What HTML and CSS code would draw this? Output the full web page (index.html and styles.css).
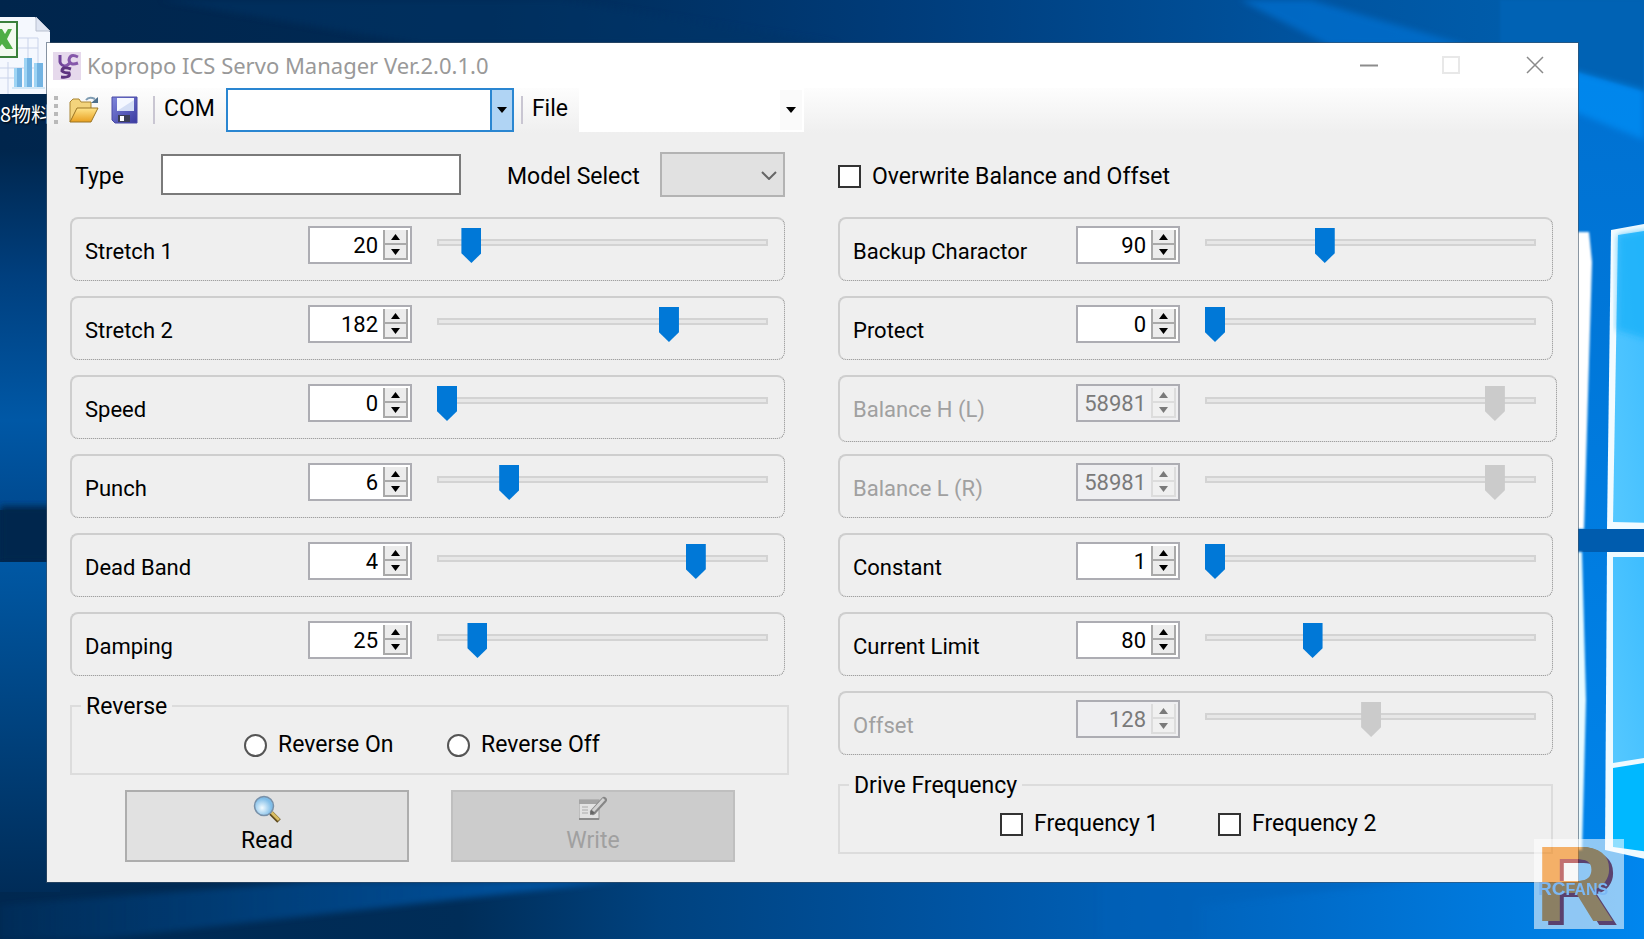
FILE: index.html
```html
<!DOCTYPE html>
<html lang="en">
<head>
<meta charset="utf-8">
<title>Kopropo ICS Servo Manager</title>
<link rel="stylesheet" href="styles.css">
</head>
<body>
<div class="desktop">
  <svg class="wallpaper" viewBox="0 0 1644 939" preserveAspectRatio="none" aria-hidden="true">
    <defs>
      <linearGradient id="sky" x1="0" x2="1" y1="0" y2="0">
        <stop offset="0" stop-color="#00254c"/><stop offset=".3" stop-color="#002a55"/>
        <stop offset=".55" stop-color="#003c7a"/><stop offset=".8" stop-color="#0054a0"/>
        <stop offset="1" stop-color="#0062b2"/>
      </linearGradient>
      <linearGradient id="floor" x1="0" x2="1" y1="0" y2="0">
        <stop offset="0" stop-color="#002850"/><stop offset=".28" stop-color="#002d58"/>
        <stop offset=".4" stop-color="#00427f"/><stop offset=".6" stop-color="#0056a6"/>
        <stop offset=".8" stop-color="#006cca"/><stop offset="1" stop-color="#0086ee"/>
      </linearGradient>
      <linearGradient id="beam" x1="0" x2="1" y1="0" y2="0">
        <stop offset="0" stop-color="#0060b8" stop-opacity=".1"/><stop offset="1" stop-color="#0064c0"/>
      </linearGradient>
      <linearGradient id="side" x1="0" x2="0" y1="0" y2="1">
        <stop offset="0" stop-color="#00264d"/><stop offset=".35" stop-color="#003f7e"/>
        <stop offset=".75" stop-color="#0058a6"/><stop offset="1" stop-color="#004a90"/>
      </linearGradient>
      <linearGradient id="side2" x1="0" x2="0" y1="0" y2="1">
        <stop offset="0" stop-color="#0058a4"/><stop offset="1" stop-color="#002c58"/>
      </linearGradient>
      <linearGradient id="right" x1="0" x2="0" y1="0" y2="1">
        <stop offset="0" stop-color="#0070d0"/><stop offset="1" stop-color="#0084ea"/>
      </linearGradient>
      <linearGradient id="pane" x1="0" x2="1" y1="1" y2="0">
        <stop offset="0" stop-color="#55c8ff"/><stop offset="1" stop-color="#3cbcff"/>
      </linearGradient>
      <filter id="soft"><feGaussianBlur stdDeviation="3"/></filter>
      <filter id="glow"><feGaussianBlur stdDeviation="1"/></filter>
    </defs>
    <rect width="1644" height="500" fill="url(#sky)"/>
    <rect y="500" width="1644" height="439" fill="url(#floor)"/>
    <path d="M160 0L420 44H840L560 0Z" fill="#003468" opacity=".5" filter="url(#soft)"/>
    <path d="M1240 0L1310 0L1470 46H1330Z" fill="#0072d4" opacity=".7" filter="url(#soft)"/>
    <rect y="150" width="60" height="360" fill="url(#side)"/>
    <rect y="506" width="60" height="56" fill="#00264e" filter="url(#soft)"/>
    <rect y="562" width="60" height="330" fill="url(#side2)"/>
    <path d="M100 939L620 881H320L0 905V939Z" fill="url(#beam)" opacity=".75" filter="url(#soft)"/>
    <path d="M1200 905L1420 881H1100V939H1200Z" fill="#0060b8" opacity=".5" filter="url(#soft)"/>
    <path d="M1560 40H1644V860H1560Z" fill="url(#right)"/>
    <path d="M1500 0H1644V92L1570 70V44H1500Z" fill="#0062b4" filter="url(#glow)"/>
    <path d="M1570 70L1644 90V140L1570 110Z" fill="#0090f8" opacity=".7" filter="url(#soft)"/>
    <path d="M1574 232H1589L1592 262L1584 529H1574Z" fill="#fff" filter="url(#glow)"/>
    <path d="M1611 230L1650 223V529H1607Z" fill="#f2fbff"/>
    <path d="M1618 235L1650 230V523L1613 522Z" fill="url(#pane)"/>
    <path d="M1618 235L1650 230V340L1617 330Z" fill="#18b0f8" opacity=".7" filter="url(#soft)"/>
    <path d="M1574 529H1650V552H1574Z" fill="#005cae"/>
    <path d="M1574 552H1582L1586 700L1582 850H1574Z" fill="#e8faff" filter="url(#glow)"/>
    <path d="M1607 552H1650V860L1605 850Z" fill="#eefaff"/>
    <path d="M1613 557H1650V757L1613 763Z" fill="url(#pane)"/>
    <path d="M1613 768L1650 762V852L1613 847Z" fill="#00b8ff"/>
  </svg>

  <div class="shortcut">
    <svg class="shortcut-icon" viewBox="0 0 50 80" aria-hidden="true">
      <path d="M0 1H35L50 16V78H0Z" fill="#f5f8fe"/>
      <path d="M36 1V15H50Z" fill="#dfe5f2" stroke="#b9c0cf"/>
      <path d="M18 22H38V60M0 52H40M18 32H38M28 22V60M8 46V78M0 62H16" fill="none" stroke="#c9d3ea"/>
      <rect x="-8" y="6" width="25" height="35" fill="#f2faef" stroke="#39803a" stroke-width="2"/>
      <path d="M-6 13H2L5 18L8 13H12L7 23L13 33H6L2 28L-2 33Z" fill="#4fae45"/>
      <path d="M14 52H22V71H14ZM24 42H32V71H24ZM34 47H43V71H34Z" fill="#72b3e2"/>
      <path d="M14 52H17V71H14ZM24 42H27V71H24ZM34 47H37V71H34Z" fill="#9ed4f4"/>
      <path d="M12 72H45" stroke="#b2d8ef"/>
    </svg>
    <span class="shortcut-label">8物料</span>
  </div>

  <main class="window">
    <header class="titlebar">
      <svg class="app-icon" viewBox="0 0 28 28" aria-hidden="true">
        <rect width="28" height="28" fill="#e6d9ec"/>
        <path d="M7 3V10Q8 14 13 14" fill="none" stroke="#71459a" stroke-width="3"/>
        <path d="M25 5Q17 1 16 8Q17 14 25 11M12 15L17 11" fill="none" stroke="#8557aa" stroke-width="3"/>
        <path d="M18 17Q9 14 9 19Q11 21 16 21Q18 26 8 25" fill="none" stroke="#5e3480" stroke-width="3"/>
      </svg>
      <h1 class="title">Kopropo ICS Servo Manager Ver.2.0.1.0</h1>
      <button class="caption-button" type="button" aria-label="Minimize"><svg viewBox="0 0 18 18"><path d="M0 9.500H18" stroke="#8c8c8c" stroke-width="2"/></svg></button>
      <button class="caption-button" type="button" aria-label="Maximize" disabled><svg viewBox="0 0 18 18"><rect x="1" y="1" width="16" height="16" fill="none" stroke="#e8e8e8" stroke-width="2"/></svg></button>
      <button class="caption-button" type="button" aria-label="Close"><svg viewBox="0 0 18 18"><path d="M1 1L17 17M17 1L1 17" stroke="#8a8a8a" stroke-width="1.500"/></svg></button>
    </header>

    <div class="toolbar">
      <span class="grip"></span>
      <button class="tool" type="button" aria-label="Open">
        <svg viewBox="0 0 30 28"><defs><linearGradient id="fold" x1="0" x2="0" y1="0" y2="1"><stop offset="0" stop-color="#ffe58a"/><stop offset="1" stop-color="#e9a020"/></linearGradient></defs>
          <path d="M1 26V6L4 3H10L12 6H22V12" fill="#f3d47c" stroke="#a98432"/>
          <path d="M1 26L8 12H29L22 26Z" fill="url(#fold)" stroke="#9a7424"/>
          <path d="M17 4Q20 0 26 3" fill="none" stroke="#7f9cb2" stroke-width="2"/><path d="M29 1V7H22Z" fill="#4d6f8c"/></svg>
      </button>
      <button class="tool" type="button" aria-label="Save">
        <svg viewBox="0 0 30 28"><defs><linearGradient id="disk" x1="0" x2="1" y1="0" y2="1"><stop offset="0" stop-color="#7f86dc"/><stop offset="1" stop-color="#3a3aa0"/></linearGradient></defs>
          <path d="M1 1H26V27H4L1 24Z" fill="url(#disk)" stroke="#4a4aa6"/>
          <rect x="6" y="2" width="17" height="13" fill="#f4f7ff"/><path d="M6 15L23 4V15Z" fill="#d4def5"/>
          <rect x="7" y="19" width="12" height="7" fill="#3c3f58"/><rect x="9" y="20" width="4" height="5" fill="#fff"/></svg>
      </button>
      <span class="separator"></span>
      <label class="tool-label" for="com">COM</label>
      <span class="combo combo-active">
        <select id="com"><option></option></select>
        <span class="combo-arrow"><svg viewBox="0 0 10 6"><path d="M0 0H10L5 6Z"/></svg></span>
      </span>
      <span class="separator"></span>
      <label class="tool-label" for="file">File</label>
      <span class="combo combo-flat">
        <select id="file"><option></option></select>
        <span class="combo-arrow"><svg viewBox="0 0 10 6"><path d="M0 0H10L5 6Z"/></svg></span>
      </span>
    </div>

    <form class="panel">
      <section class="column">
        <div class="column-head">
          <label class="type-label" for="type">Type</label>
          <input class="type-input" id="type" type="text">
          <label class="model-label" for="model">Model Select</label>
          <span class="model">
            <select id="model"><option></option></select>
            <svg class="chevron" viewBox="0 0 16 9"><path d="M1 1L8 8L15 1" fill="none" stroke="#666" stroke-width="2"/></svg>
          </span>
        </div>
        <div class="rows">
          <div class="row"><label for="n1">Stretch 1</label><span class="spinner"><input id="n1" type="number" value="20"><span class="steps"><button type="button" aria-label="Increase"></button><button type="button" aria-label="Decrease"></button></span></span><input class="slider" type="range" aria-label="Stretch 1" min="0" max="255" value="20"></div>
          <div class="row"><label for="n2">Stretch 2</label><span class="spinner"><input id="n2" type="number" value="182"><span class="steps"><button type="button" aria-label="Increase"></button><button type="button" aria-label="Decrease"></button></span></span><input class="slider" type="range" aria-label="Stretch 2" min="0" max="255" value="182"></div>
          <div class="row"><label for="n3">Speed</label><span class="spinner"><input id="n3" type="number" value="0"><span class="steps"><button type="button" aria-label="Increase"></button><button type="button" aria-label="Decrease"></button></span></span><input class="slider" type="range" aria-label="Speed" min="0" max="255" value="0"></div>
          <div class="row"><label for="n4">Punch</label><span class="spinner"><input id="n4" type="number" value="6"><span class="steps"><button type="button" aria-label="Increase"></button><button type="button" aria-label="Decrease"></button></span></span><input class="slider" type="range" aria-label="Punch" min="0" max="30" value="6"></div>
          <div class="row"><label for="n5">Dead Band</label><span class="spinner"><input id="n5" type="number" value="4"><span class="steps"><button type="button" aria-label="Increase"></button><button type="button" aria-label="Decrease"></button></span></span><input class="slider" type="range" aria-label="Dead Band" min="0" max="5" value="4"></div>
          <div class="row"><label for="n6">Damping</label><span class="spinner"><input id="n6" type="number" value="25"><span class="steps"><button type="button" aria-label="Increase"></button><button type="button" aria-label="Decrease"></button></span></span><input class="slider" type="range" aria-label="Damping" min="0" max="255" value="25"></div>
        </div>
        <fieldset class="group group-wide">
          <legend>Reverse</legend>
          <div class="choices reverse">
            <label class="choice"><input type="radio" name="reverse">Reverse On</label>
            <label class="choice"><input type="radio" name="reverse">Reverse Off</label>
          </div>
        </fieldset>
        <div class="actions">
          <button class="action" type="button">
            <svg viewBox="0 0 28 28"><defs><radialGradient id="lens" cx=".4" cy=".6"><stop offset="0" stop-color="#f2fbff"/><stop offset="1" stop-color="#7fbde8"/></radialGradient></defs>
              <path d="M18 18L26 26" stroke="#5e4a1c" stroke-width="5"/><path d="M18 17L26 25" stroke="#d9bd63" stroke-width="3"/>
              <circle cx="11" cy="11" r="9.500" fill="url(#lens)" stroke="#7890a8" stroke-width="1.500"/></svg>
            Read
          </button>
          <button class="action" type="button" disabled>
            <svg viewBox="0 0 28 28"><rect x="0" y="5" width="20" height="19" fill="#e2e2e2" stroke="#999"/><rect x="0" y="5" width="20" height="4" fill="#a4a4a4"/>
              <path d="M3 12H9M3 15H9M3 18H9M11 18H17" stroke="#aaa"/><path d="M0 24H20" stroke="#8c8c8c" stroke-width="2"/>
              <path d="M14 17L25 5" stroke="#868686" stroke-width="6" stroke-linecap="round"/><path d="M14 16L25 4" stroke="#d2d2d2" stroke-width="3"/><path d="M11 20L12 15L16 18Z" fill="#666"/></svg>
            Write
          </button>
        </div>
      </section>

      <section class="column">
        <div class="column-head">
          <label class="choice"><input type="checkbox">Overwrite Balance and Offset</label>
        </div>
        <div class="rows">
          <div class="row"><label for="n7">Backup Charactor</label><span class="spinner"><input id="n7" type="number" value="90"><span class="steps"><button type="button" aria-label="Increase"></button><button type="button" aria-label="Decrease"></button></span></span><input class="slider" type="range" aria-label="Backup Charactor" min="0" max="255" value="90"></div>
          <div class="row"><label for="n8">Protect</label><span class="spinner"><input id="n8" type="number" value="0"><span class="steps"><button type="button" aria-label="Increase"></button><button type="button" aria-label="Decrease"></button></span></span><input class="slider" type="range" aria-label="Protect" min="0" max="255" value="0"></div>
          <div class="row row-large disabled"><label for="n9">Balance H (L)</label><span class="spinner"><input id="n9" type="number" value="58981" disabled><span class="steps"><button type="button" aria-label="Increase" disabled></button><button type="button" aria-label="Decrease" disabled></button></span></span><input class="slider" type="range" aria-label="Balance H (L)" min="0" max="65535" value="58981" disabled></div>
          <div class="row disabled"><label for="n10">Balance L (R)</label><span class="spinner"><input id="n10" type="number" value="58981" disabled><span class="steps"><button type="button" aria-label="Increase" disabled></button><button type="button" aria-label="Decrease" disabled></button></span></span><input class="slider" type="range" aria-label="Balance L (R)" min="0" max="65535" value="58981" disabled></div>
          <div class="row"><label for="n11">Constant</label><span class="spinner"><input id="n11" type="number" value="1"><span class="steps"><button type="button" aria-label="Increase"></button><button type="button" aria-label="Decrease"></button></span></span><input class="slider" type="range" aria-label="Constant" min="1" max="255" value="1"></div>
          <div class="row"><label for="n12">Current Limit</label><span class="spinner"><input id="n12" type="number" value="80"><span class="steps"><button type="button" aria-label="Increase"></button><button type="button" aria-label="Decrease"></button></span></span><input class="slider" type="range" aria-label="Current Limit" min="0" max="255" value="80"></div>
          <div class="row disabled"><label for="n13">Offset</label><span class="spinner"><input id="n13" type="number" value="128" disabled><span class="steps"><button type="button" aria-label="Increase" disabled></button><button type="button" aria-label="Decrease" disabled></button></span></span><input class="slider" type="range" aria-label="Offset" min="0" max="255" value="128" disabled></div>
        </div>
        <fieldset class="group">
          <legend>Drive Frequency</legend>
          <div class="choices frequency">
            <label class="choice"><input type="checkbox">Frequency 1</label>
            <label class="choice"><input type="checkbox">Frequency 2</label>
          </div>
        </fieldset>
      </section>
    </form>
  </main>

  <div class="watermark">
    <span class="watermark-letter">R</span>
    <span class="watermark-name">RC<small>FANS</small></span>
  </div>
</div>
</body>
</html>
```

FILE: styles.css
```css
* { box-sizing: border-box; }

body {
  margin: 0;
  color: #000;
  font: 22px/28px Roboto, "Noto Sans", sans-serif;
}

button, input, select { font: inherit; color: inherit; margin: 0; }

.desktop {
  position: relative;
  min-height: 100vh;
  padding: 43px 66px 57px 47px;
  overflow: hidden;
  background: #003a75;
}

.wallpaper {
  position: absolute;
  inset: 0;
  width: 100%;
  height: 100%;
}

.shortcut { position: absolute; left: 0; top: 16px; width: 50px; }
.shortcut-icon { display: block; width: 50px; height: 80px; }
.shortcut-label {
  display: block;
  color: #fff;
  font: 20px/36px "Noto Sans CJK SC", sans-serif;
  white-space: nowrap;
  text-shadow: 1px 1px 2px #000;
}

.window {
  position: relative;
  background: #efefef;
  box-shadow: 0 0 0 1px rgba(60, 80, 100, .6);
}

/* Title bar */
.titlebar {
  display: flex;
  align-items: center;
  height: 45px;
  padding-left: 6px;
  background: #fff;
}
.app-icon { width: 28px; height: 28px; margin-right: 6px; }
.title {
  flex: 1;
  margin: 0 0 2px;
  color: #999;
  font: 400 22px/30px "Noto Sans", sans-serif;
}
.caption-button {
  width: 82px;
  height: 45px;
  padding: 0 0 4px;
  border: 0;
  background: none;
}
.caption-button:last-child { width: 86px; }
.caption-button svg { width: 18px; height: 18px; vertical-align: middle; }

/* Toolbar */
.toolbar {
  display: flex;
  align-items: center;
  height: 45px;
  padding: 0 0 1px 7px;
  background: linear-gradient(#fdfdfd, #efefef);
}
.grip {
  width: 4px;
  height: 28px;
  margin-right: 11px;
  background: repeating-linear-gradient(#b9b9b9 0 4px, transparent 4px 8px);
}
.tool { width: 30px; height: 28px; margin-right: 12px; padding: 0; border: 0; background: none; }
.tool svg { display: block; width: 30px; height: 28px; }
.separator { width: 2px; height: 28px; background: #c9c6d2; }
.tool-label { margin: 0 11px 2px 9px; font-size: 23px; }
.combo { position: relative; height: 44px; }
.combo select, .model select {
  width: 100%;
  height: 100%;
  padding: 0;
  border: 0;
  border-radius: 0;
  appearance: none;
  background: none;
}
.combo-arrow {
  position: absolute;
  top: 0;
  right: 0;
  bottom: 0;
  display: grid;
  place-items: center;
  width: 22px;
  pointer-events: none;
}
.combo-arrow svg { width: 10px; height: 6px; }
.combo-active { width: 288px; margin-right: 7px; border: 2px solid #2a86d1; background: #fff; }
.combo-active .combo-arrow { border-left: 2px solid #2a86d1; background: #b0d4f4; }
.combo-flat { width: 225px; border: 2px solid #fff; background: #fff; }
.combo-flat .combo-arrow { background: #fafafa; }

/* Form */
.panel {
  display: grid;
  grid-template-columns: 1fr 1fr;
  gap: 53px;
  padding: 19px 25px 20px 23px;
}
.column { display: flex; flex-direction: column; min-width: 0; }
.column-head { display: flex; align-items: center; height: 45px; margin-bottom: 20px; }
.column-head label { padding-top: 4px; font-size: 23px; }
.column-head .type-label { width: 91px; padding-left: 5px; }
.column-head .model-label { width: 199px; padding-left: 46px; white-space: nowrap; }
.type-input {
  flex: 1;
  min-width: 0;
  height: 41px;
  padding: 0 6px;
  border: 2px solid #7a7a7a;
  background: #fff;
}
.model { position: relative; width: 125px; height: 45px; border: 2px solid #b3b3b3; background: #e1e1e1; }
.chevron { position: absolute; right: 6px; top: 17px; width: 16px; height: 9px; pointer-events: none; }

.rows { display: grid; grid-auto-rows: 64px; gap: 15px; }
.row {
  display: grid;
  grid-template-columns: 198px 104px 1fr;
  column-gap: 25px;
  align-items: start;
  height: 64px;
  padding: 7px 16px 0 13px;
  border: 1px dotted #8c8c8c;
  border-top: 2px solid #cecece;
  border-left: 2px solid #cecece;
  border-radius: 8px;
}
.row-large { width: calc(100% + 4px); height: 67px; padding-right: 20px; }
.row label { padding-top: 12px; white-space: nowrap; }
.disabled label { color: #a0a0a0; }

.spinner {
  display: flex;
  align-items: flex-start;
  height: 38px;
  padding: 2px 2px 0 0;
  border: 2px solid #adadb3;
  background: #fff;
}
.spinner input {
  flex: 1;
  min-width: 0;
  height: 30px;
  padding: 0 5px 0 0;
  border: 0;
  background: none;
  text-align: right;
  appearance: textfield;
}
.spinner input::-webkit-inner-spin-button { appearance: none; margin: 0; }
.steps { display: flex; flex-direction: column; width: 25px; height: 30px; }
.steps button {
  position: relative;
  flex: 1;
  padding: 0;
  border: 1px solid #a9a9a9;
  border-width: 0 2px 2px;
  background: #ececec;
}
.steps button::after {
  content: "";
  position: absolute;
  inset: 4px 6px 3px;
  background: #000;
  clip-path: polygon(50% 0, 100% 100%, 0 100%);
}
.steps button:last-child::after { clip-path: polygon(0 0, 100% 0, 50% 100%); }
.disabled .spinner { background: #efeff1; }
.disabled input { color: #7a7a7a; }
.disabled .steps button { border-color: #dcdcdc; background: #f0f0f0; }
.disabled .steps button::after { background: #7a7a7a; }

.slider {
  width: 100%;
  height: 35px;
  margin-top: 2px;
  appearance: none;
  background: linear-gradient(#e7e7e7, #e7e7e7) 2px 13px / calc(100% - 4px) 3px no-repeat,
    linear-gradient(#d3d3d3, #d3d3d3) 0 11px / 100% 7px no-repeat;
}
.slider::-webkit-slider-thumb {
  appearance: none;
  width: 20px;
  height: 35px;
  background: #0078d7;
  clip-path: polygon(0 0, 100% 0, 100% 72%, 50% 100%, 0 72%);
}
.slider:disabled::-webkit-slider-thumb { background: #cbcbcb; }

.group {
  min-width: 0;
  height: 84px;
  margin: 15px 0 0;
  padding: 0;
  border: 2px solid #dcdcdc;
}
.group-wide { width: calc(100% + 4px); }
.group legend { height: 30px; margin-left: 9px; padding: 0 5px; font-size: 23px; line-height: 32px; }
.choices { display: grid; align-items: center; height: 48px; }
.reverse { grid-template-columns: 203px auto; padding-left: 172px; }
.frequency { grid-template-columns: 218px auto; padding-left: 160px; }
.choice { display: flex; align-items: center; gap: 11px; font-size: 23px; white-space: nowrap; }
.choice input {
  flex: none;
  width: 23px;
  height: 23px;
  border: 2px solid #333;
  appearance: none;
  background: #fff;
}
.choice input[type="radio"] { border-color: #555; border-radius: 50%; }

.actions { display: flex; gap: 42px; margin-top: 15px; padding: 0 50px 0 55px; }
.action {
  display: flex;
  flex: 1;
  flex-direction: column;
  align-items: center;
  gap: 4px;
  height: 72px;
  padding: 3px 0 0;
  border: 2px solid #adadad;
  background: #e1e1e1;
  font-size: 23px;
}
.action svg { width: 28px; height: 28px; }
.action:disabled { border-color: #bfbfbf; background: #ccc; color: #a0a0a0; }

/* Site mark over the lower right corner */
.watermark {
  position: absolute;
  right: 20px;
  bottom: 10px;
  width: 90px;
  height: 90px;
  background: #fff;
  opacity: .56;
}
.watermark-letter {
  position: absolute;
  left: 1px;
  top: 0;
  color: #f88000;
  font: bold 108px/90px "Liberation Sans", sans-serif;
  text-shadow: 1px 0 0 #f88000, 2px 0 0 #f88000, 6px 4px 0 #a01010;
}
.watermark-name {
  position: absolute;
  left: 4px;
  top: 40px;
  color: #dde4ff;
  font: bold 19px/20px "Liberation Sans", sans-serif;
}
.watermark-name small { font-size: 16px; }
```
